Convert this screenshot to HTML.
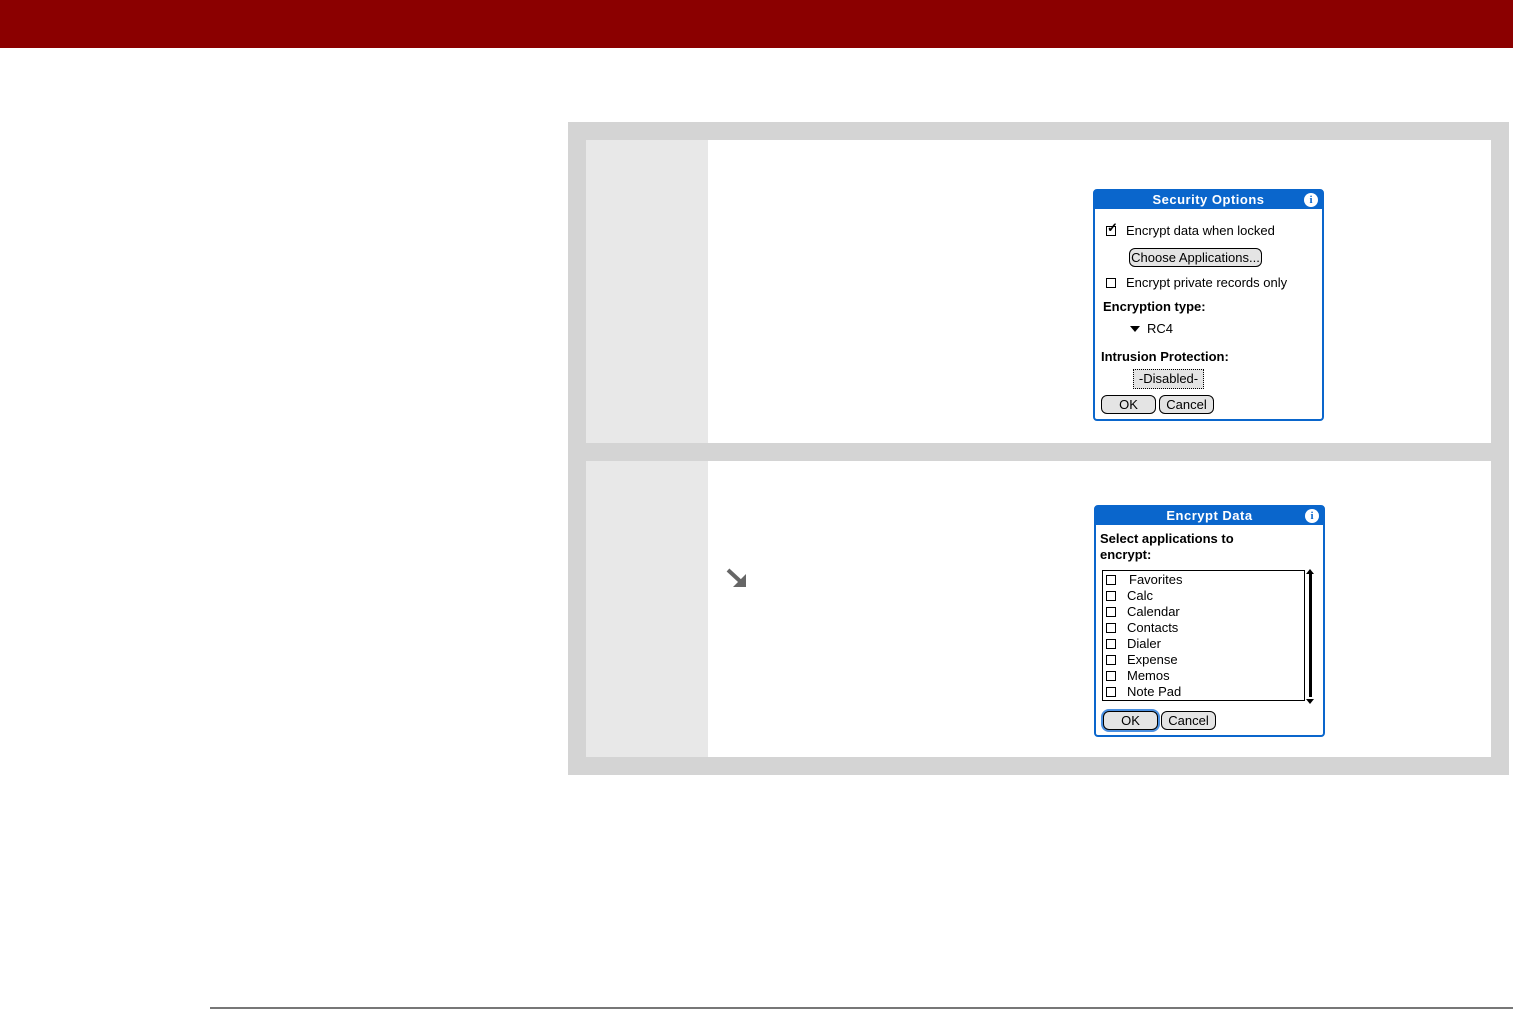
<!DOCTYPE html>
<html><head><meta charset="utf-8"><style>
*{margin:0;padding:0;box-sizing:border-box}
body{width:1513px;height:1010px;background:#fff;position:relative;overflow:hidden;font-family:"Liberation Sans",sans-serif}
.a{position:absolute}
.dlg{position:absolute;border:2px solid #0a66cc;border-radius:4px;background:#fff;font-size:13px;color:#000}
.tb{position:absolute;left:0;top:0;right:0;height:18px;background:#0a66cc;color:#fff;font-weight:bold;text-align:center;font-size:13px;line-height:18px;letter-spacing:.5px}
.info{position:absolute;right:4px;top:2px;width:14px;height:14px;border-radius:50%;background:#fff;color:#0a66cc;font:bold 11px/14px "Liberation Serif",serif;text-align:center}
.cb{position:absolute;width:10px;height:10px;border:1px solid #000}
.btn{position:absolute;border:1px solid #000;border-radius:6px;background:#e4e4e4;text-align:center;font-size:13px;line-height:17px}
.t{position:absolute;white-space:nowrap}
b.t{font-weight:bold}
</style></head><body>
<div class="a" style="left:0;top:0;width:1513px;height:48px;background:#8b0000"></div>
<div class="a" style="left:210px;top:1007px;width:1303px;height:2px;background:#777"></div>
<div class="a" style="left:568px;top:122px;width:941px;height:653px;background:#d4d4d4"></div>
<div class="a" style="left:586px;top:140px;width:122px;height:303px;background:#e8e8e8"></div>
<div class="a" style="left:708px;top:140px;width:783px;height:303px;background:#fff"></div>
<div class="a" style="left:586px;top:461px;width:122px;height:296px;background:#e8e8e8"></div>
<div class="a" style="left:708px;top:461px;width:783px;height:296px;background:#fff"></div>
<svg class="a" style="left:725px;top:567px" width="24" height="22"><path d="M3 3 L16 15" stroke="#666" stroke-width="4"/><path d="M8 20 L21 20 L21 7 Z" fill="#666"/></svg>

<div class="dlg" style="left:1093px;top:189px;width:231px;height:232px">
<div class="tb">Security Options</div><div class="info">i</div>
<div class="cb" style="left:11px;top:35px"></div><span class="t" style="left:12px;top:29px;font-weight:bold;font-size:13px">✓</span>
<span class="t" style="left:31px;top:32px">Encrypt data when locked</span>
<div class="btn" style="left:34px;top:57px;width:133px;height:19px">Choose Applications...</div>
<div class="cb" style="left:11px;top:87px"></div>
<span class="t" style="left:31px;top:84px">Encrypt private records only</span>
<b class="t" style="left:8px;top:108px;font-size:13px">Encryption type:</b>
<svg class="a" style="left:35px;top:135px" width="11" height="7"><path d="M0 0H10L5 6Z" fill="#000"/></svg>
<span class="t" style="left:52px;top:130px">RC4</span>
<b class="t" style="left:6px;top:158px;font-size:13px">Intrusion Protection:</b>
<div class="a" style="left:38px;top:178px;width:71px;height:20px;border:1px dotted #000;background:#e4e4e4;text-align:center;line-height:18px">-Disabled-</div>
<div class="btn" style="left:6px;top:204px;width:55px;height:19px">OK</div>
<div class="btn" style="left:64px;top:204px;width:55px;height:19px">Cancel</div>
</div>

<div class="dlg" style="left:1094px;top:505px;width:231px;height:232px">
<div class="tb">Encrypt Data</div><div class="info">i</div>
<b class="t" style="left:4px;top:24px;font-size:13px">Select applications to</b>
<b class="t" style="left:4px;top:40px;font-size:13px">encrypt:</b>
<div class="a" style="left:6px;top:63px;width:203px;height:131px;border:1px solid #000"></div>
<div class="a" style="left:213px;top:66px;width:3px;height:124px;background:#000"></div>
<svg class="a" style="left:209px;top:61px" width="11" height="138"><path d="M1 6H9L5 1Z M1 131H9L5 136Z" fill="#000"/></svg>
<div class="cb" style="left:10px;top:68px"></div><span class="t" style="left:33px;top:65px">Favorites</span>
<div class="cb" style="left:10px;top:84px"></div><span class="t" style="left:31px;top:81px">Calc</span>
<div class="cb" style="left:10px;top:100px"></div><span class="t" style="left:31px;top:97px">Calendar</span>
<div class="cb" style="left:10px;top:116px"></div><span class="t" style="left:31px;top:113px">Contacts</span>
<div class="cb" style="left:10px;top:132px"></div><span class="t" style="left:31px;top:129px">Dialer</span>
<div class="cb" style="left:10px;top:148px"></div><span class="t" style="left:31px;top:145px">Expense</span>
<div class="cb" style="left:10px;top:164px"></div><span class="t" style="left:31px;top:161px">Memos</span>
<div class="cb" style="left:10px;top:180px"></div><span class="t" style="left:31px;top:177px">Note Pad</span>
<div class="btn" style="left:7px;top:204px;width:55px;height:19px;box-shadow:0 0 0 2px #4a8fe0">OK</div>
<div class="btn" style="left:65px;top:204px;width:55px;height:19px">Cancel</div>
</div>
</body></html>
